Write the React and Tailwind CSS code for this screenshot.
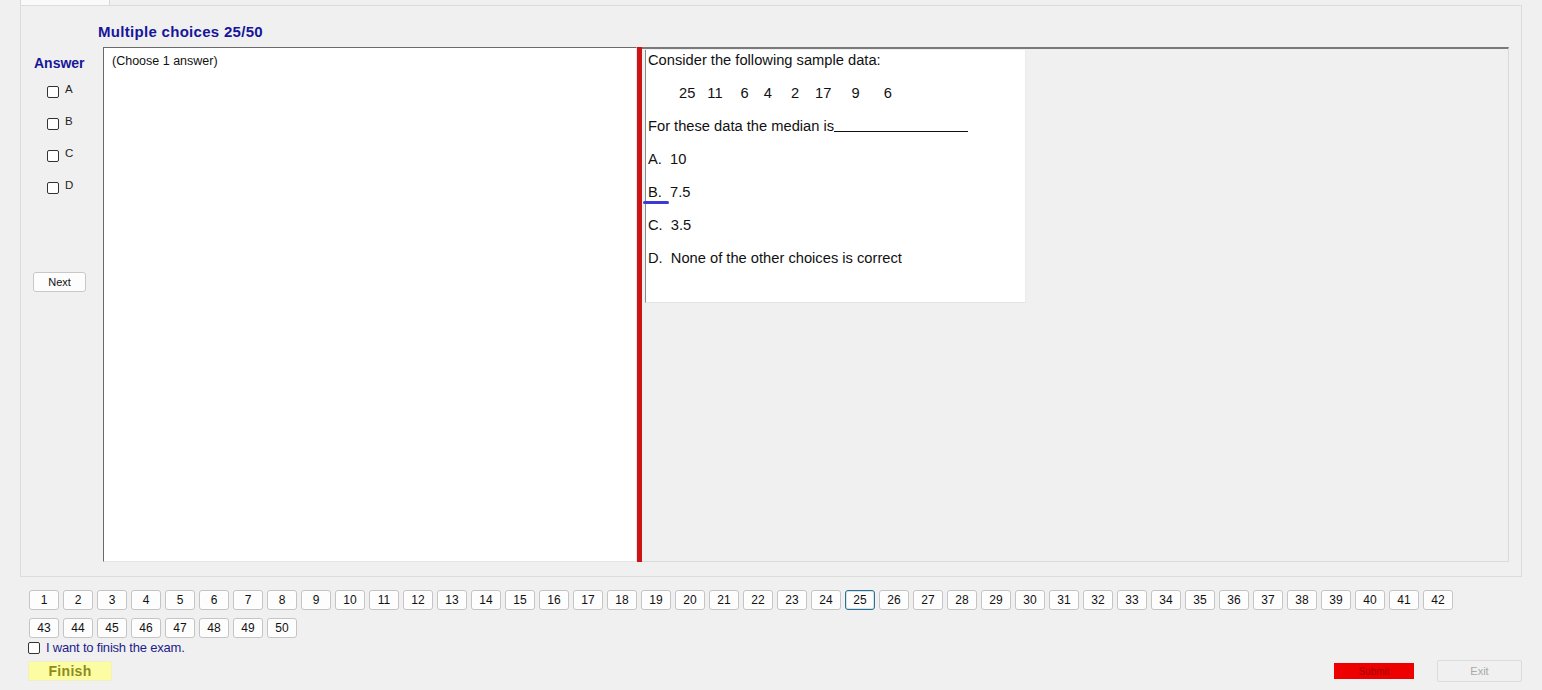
import React from "react";

const font = { fontFamily: '"Liberation Sans", Arial, sans-serif' };

function Box() {
  return <span className="inline-block w-[12px] h-[12px] rounded-[2px] border border-[#333333] bg-white" />;
}

function NumBtn({ n, active }) {
  return (
    <div
      className={
        "w-[30px] h-[20px] flex items-center justify-center text-[12px] text-[#111] rounded-[3px] bg-[#fdfdfd] " +
        (active ? "border border-[#2f6f8f] shadow-[inset_0_0_0_1px_#cfe3ef]" : "border border-[#c4c4c4] shadow-[inset_0_0_0_1px_#ffffff]")
      }
    >
      {n}
    </div>
  );
}

export default function App() {
  const row1 = Array.from({ length: 42 }, (_, i) => i + 1);
  const row2 = Array.from({ length: 8 }, (_, i) => i + 43);
  return (
    <div className="w-[1542px] h-[690px] bg-[#f0f0f0] flex flex-col overflow-hidden" style={font}>
      {/* tab strip */}
      <div className="h-[5px] flex">
        <div className="ml-[20px] w-[90px] h-[5px] bg-[#fafafa] border-x border-[#d8d8d8]" />
      </div>
      {/* tab panel */}
      <div className="ml-[20px] w-[1502px] h-[572px] border border-[#dcdcdc] flex flex-col">
        <div className="pl-[77px] pt-[17px] h-[41px] text-[15px] leading-[17px] font-bold tracking-[0.3px] text-[#16169a]">
          Multiple choices 25/50
        </div>
        <div className="flex h-[515px] pr-[12px]">
          {/* answer column */}
          <div className="w-[82px] flex flex-col">
            <div className="pl-[13px] pt-[9px] text-[14px] leading-[14px] font-bold text-[#16169a]">Answer</div>
            <div className="mt-[12px] flex flex-col gap-[12px] pl-[26px]">
              {["A", "B", "C", "D"].map((l) => (
                <div key={l} className="h-[20px] flex items-center gap-[6px] text-[11.5px] text-[#222]">
                  <Box />
                  <span className="-mt-[4px]">{l}</span>
                </div>
              ))}
            </div>
            <div className="mt-[74px] ml-[12px] w-[53px] h-[20px] flex items-center justify-center text-[11px] text-[#111] bg-[#fdfdfd] border border-[#c8c8c8] rounded-[3px]">
              Next
            </div>
          </div>
          {/* textbox */}
          <div className="w-[534px] h-full bg-white border-t border-l border-[#6a6a6a] border-r border-b border-r-[#e6e6e6] border-b-[#e6e6e6] pl-[8px] pt-[6px] text-[12.5px] leading-[14px] text-[#111]">
            (Choose 1 answer)
          </div>
          {/* red splitter */}
          <div className="w-[5px] h-full bg-[#cc1414]" />
          {/* right area */}
          <div className="flex-1 h-full border-t-2 border-[#7a7a7a] border-r border-b border-r-[#dadada] border-b-[#dadada] pl-[3px] pt-[1px]">
            <div className="w-[381px] h-[253px] bg-white border-l border-[#8a8a8a] border-b border-b-[#e4e4e4] border-r border-r-[#ececec] pl-[2px] pt-[2px] text-[14.7px] leading-[16px] text-[#111] flex flex-col gap-[17px]">
              <div>Consider the following sample data:</div>
              <div className="flex">
                <span className="ml-[31px]">25</span>
                <span className="ml-[12px]">11</span>
                <span className="ml-[18px]">6</span>
                <span className="ml-[15px]">4</span>
                <span className="ml-[19px]">2</span>
                <span className="ml-[16px]">17</span>
                <span className="ml-[20px]">9</span>
                <span className="ml-[24px]">6</span>
              </div>
              <div className="flex items-end">
                <span>For these data the median is</span>
                <span className="inline-block w-[134px] border-b border-[#111] mb-[2px]" />
              </div>
              <div>A.&nbsp; 10</div>
              <div className="relative">
                B.&nbsp; 7.5
                <span className="absolute left-[-5px] top-[17px] w-[26px] h-[3px] rounded-full bg-[#3b3bd4]" />
              </div>
              <div>C.&nbsp; 3.5</div>
              <div>D.&nbsp; None of the other choices is correct</div>
            </div>
          </div>
        </div>
      </div>
      {/* bottom */}
      <div className="pl-[29px] pt-[13px] flex flex-col">
        <div className="flex gap-[4px]">
          {row1.map((n) => (
            <NumBtn key={n} n={n} active={n === 25} />
          ))}
        </div>
        <div className="flex gap-[4px] mt-[8px]">
          {row2.map((n) => (
            <NumBtn key={n} n={n} />
          ))}
        </div>
        <div className="flex items-center gap-[6px] mt-[4px] -ml-[1px] h-[12px]">
          <Box />
          <span className="text-[13px] leading-[14px] text-[#1c1c8c] tracking-[-0.2px]">I want to finish the exam.</span>
        </div>
        <div className="flex items-center mt-[6px] h-[22px] -ml-[1px]">
          <div className="w-[84px] h-[20px] bg-[#fcfca2] border border-[#f0f0c8] flex items-center justify-center text-[14px] tracking-[0.3px] font-bold text-[#8c8c1c]">
            Finish
          </div>
          <div className="ml-[1222px] w-[80px] h-[16px] bg-[#ee0000] flex items-center justify-center text-[10px] text-[#a00000]">
            Submit
          </div>
          <div className="ml-[23px] w-[85px] h-[22px] border border-[#dcdcdc] rounded-[2px] flex items-center justify-center text-[11px] text-[#a8a8a8]">
            Exit
          </div>
        </div>
      </div>
    </div>
  );
}
